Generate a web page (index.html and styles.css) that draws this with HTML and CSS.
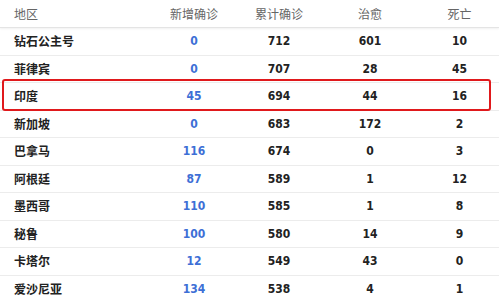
FILE: index.html
```html
<!DOCTYPE html>
<html lang="zh">
<head>
<meta charset="utf-8">
<link rel="stylesheet" href="styles.css">
</head>
<body>
<div class="table">
  <div class="row head">
    <div class="c name">地区</div><div class="c">新增确诊</div><div class="c">累计确诊</div><div class="c">治愈</div><div class="c">死亡</div>
  </div>
  <div class="row"><div class="c name">钻石公主号</div><div class="c new">0</div><div class="c">712</div><div class="c">601</div><div class="c">10</div></div>
  <div class="row"><div class="c name">菲律宾</div><div class="c new">0</div><div class="c">707</div><div class="c">28</div><div class="c">45</div></div>
  <div class="row"><div class="c name">印度</div><div class="c new">45</div><div class="c">694</div><div class="c">44</div><div class="c">16</div></div>
  <div class="row"><div class="c name">新加坡</div><div class="c new">0</div><div class="c">683</div><div class="c">172</div><div class="c">2</div></div>
  <div class="row"><div class="c name">巴拿马</div><div class="c new">116</div><div class="c">674</div><div class="c">0</div><div class="c">3</div></div>
  <div class="row"><div class="c name">阿根廷</div><div class="c new">87</div><div class="c">589</div><div class="c">1</div><div class="c">12</div></div>
  <div class="row"><div class="c name">墨西哥</div><div class="c new">110</div><div class="c">585</div><div class="c">1</div><div class="c">8</div></div>
  <div class="row"><div class="c name">秘鲁</div><div class="c new">100</div><div class="c">580</div><div class="c">14</div><div class="c">9</div></div>
  <div class="row"><div class="c name">卡塔尔</div><div class="c new">12</div><div class="c">549</div><div class="c">43</div><div class="c">0</div></div>
  <div class="row"><div class="c name">爱沙尼亚</div><div class="c new">134</div><div class="c">538</div><div class="c">4</div><div class="c">1</div></div>
  <div class="highlight"></div>
</div>
</body>
</html>
```
FILE: styles.css
```css
html, body {
  margin: 0;
  padding: 0;
  background: #fff;
}
body {
  width: 499px;
  height: 298px;
  overflow: hidden;
}
.table {
  position: relative;
  font-family: "DejaVu Sans Condensed", "DejaVu Sans", Verdana, "Noto Sans CJK SC", sans-serif;
  font-stretch: condensed;
}
.row {
  display: grid;
  grid-template-columns: 150px 88px 82px 100px 79px;
  height: 27.5px;
  align-items: center;
  border-bottom: 1px solid #ececec;
  box-sizing: border-box;
  font-size: 12px;
  font-weight: bold;
  color: #222;
}
.row.head {
  height: 28px;
  font-family: "Noto Sans CJK SC", sans-serif;
  font-stretch: normal;
  font-weight: normal;
  font-size: 12px;
  color: #666;
  border-bottom: 1px solid #e4e4e4;
  box-shadow: 0 1px 2px rgba(0,0,0,0.06);
}
.c {
  text-align: center;
  line-height: 1;
}
.c.name {
  text-align: left;
  padding-left: 14px;
  font-family: "Noto Sans CJK SC", sans-serif;
  font-stretch: normal;
}
.row .c.name {
  font-size: 12px;
  font-weight: bold;
  color: #222;
}
.row.head .c.name {
  font-weight: normal;
  color: #666;
}
.c.new {
  color: #3d6fd6;
}
.highlight {
  position: absolute;
  left: 2px;
  top: 79px;
  width: 489px;
  height: 32px;
  box-sizing: border-box;
  border: 2.5px solid #e0191c;
  border-radius: 3px;
}
```
